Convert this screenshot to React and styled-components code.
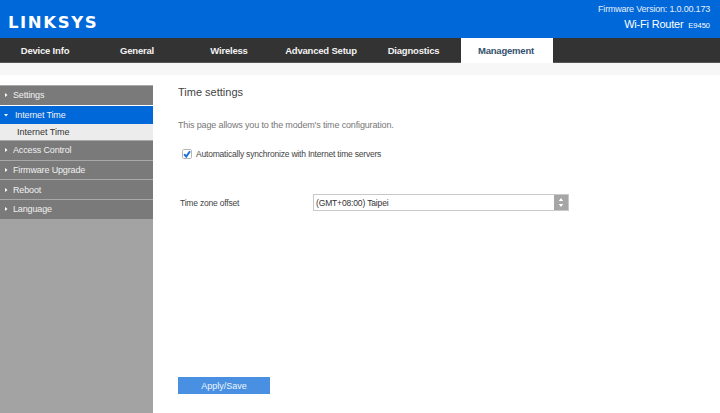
import styled, { createGlobalStyle } from 'styled-components';

const GlobalStyle = createGlobalStyle`
  html, body {
    margin: 0;
    padding: 0;
    background: #fff;
  }
  body {
    font-family: "Liberation Sans", Arial, sans-serif;
  }
`;

const tabs = [
  { label: 'Device Info', width: 92 },
  { label: 'General', width: 92 },
  { label: 'Wireless', width: 92 },
  { label: 'Advanced Setup', width: 92 },
  { label: 'Diagnostics', width: 93 },
  { label: 'Management', width: 92, active: true },
];

const menu = [
  { label: 'Settings' },
  { label: 'Internet Time', open: true, children: ['Internet Time'] },
  { label: 'Access Control' },
  { label: 'Firmware Upgrade' },
  { label: 'Reboot' },
  { label: 'Language' },
];

const Arrow = ({ open }) => (
  <ArrowBox $open={open} viewBox="0 0 6 6">
    {open ? <path d="M1 2h4L3 4.5z" /> : <path d="M2 1v4L4.5 3z" />}
  </ArrowBox>
);

const App = () => (
  <Page>
    <GlobalStyle />
    <Header>
      <Logo>LINKSYS</Logo>
      <HeaderInfo>
        <Firmware>Firmware Version: 1.0.00.173</Firmware>
        <Product>
          Wi-Fi Router <Model>E9450</Model>
        </Product>
      </HeaderInfo>
    </Header>
    <Nav>
      {tabs.map((tab) => (
        <Tab key={tab.label} $width={tab.width} $active={tab.active}>
          {tab.label}
        </Tab>
      ))}
    </Nav>
    <Strip />
    <Body>
      <Sidebar>
        {menu.map((item) => (
          <div key={item.label}>
            <MenuItem $open={item.open}>
              <Arrow open={item.open} />
              {item.label}
            </MenuItem>
            {item.children?.map((child) => (
              <SubItem key={child}>{child}</SubItem>
            ))}
          </div>
        ))}
      </Sidebar>
      <Content>
        <Title>Time settings</Title>
        <Intro>This page allows you to the modem's time configuration.</Intro>
        <CheckRow>
          <Check viewBox="0 0 10 10">
            <rect x="0.5" y="0.5" width="9" height="9" rx="1.2" fill="#fff" stroke="#b5b5b5" />
            <path d="M2.2 5.2 4.2 7.6 8 2.2" fill="none" stroke="#1a6fd8" strokeWidth="1.9" />
          </Check>
          Automatically synchronize with Internet time servers
        </CheckRow>
        <FieldRow>
          <FieldLabel>Time zone offset</FieldLabel>
          <Select>
            <SelectValue>(GMT+08:00) Taipei</SelectValue>
            <SelectButton viewBox="0 0 14 15">
              <rect width="14" height="15" fill="#a6a6a6" />
              <path d="M7 3 9.2 6H4.8zM7 12 4.8 9h4.4z" fill="#fff" />
            </SelectButton>
          </Select>
        </FieldRow>
        <ApplyButton>Apply/Save</ApplyButton>
      </Content>
    </Body>
  </Page>
);

const Page = styled.div`
  width: 720px;
  height: 413px;
  display: flex;
  flex-direction: column;
  overflow: hidden;
`;

const Header = styled.header`
  height: 38px;
  background-color: #0068d9;
  display: flex;
  justify-content: space-between;
  padding: 0 10px 0 8px;
  color: #fff;
`;

const Logo = styled.div`
  font-family: "DejaVu Sans", sans-serif;
  font-size: 16.5px;
  font-weight: 700;
  letter-spacing: 1.6px;
  line-height: 16px;
  margin-top: 15px;
`;

const HeaderInfo = styled.div`
  display: flex;
  flex-direction: column;
  align-items: flex-end;
  padding-top: 3px;
`;

const Firmware = styled.div`
  font-size: 9px;
  letter-spacing: -0.2px;
  line-height: 13px;
  color: #e4effb;
`;

const Product = styled.div`
  font-size: 11px;
  letter-spacing: -0.2px;
  line-height: 16px;
`;

const Model = styled.span`
  font-size: 7.5px;
  letter-spacing: 0;
  margin-left: 2px;
`;

const Nav = styled.nav`
  height: 24px;
  background-color: #333;
  border-bottom: 1px solid #555;
  display: flex;
`;

const Tab = styled.div`
  width: ${(p) => p.$width}px;
  box-sizing: border-box;
  padding-right: 2px;
  display: flex;
  align-items: center;
  justify-content: center;
  font-size: 9.5px;
  font-weight: 700;
  letter-spacing: -0.2px;
  background-color: ${(p) => (p.$active ? '#fff' : 'transparent')};
  color: ${(p) => (p.$active ? '#34516f' : '#f2f2f2')};
  height: ${(p) => (p.$active ? '25px' : 'auto')};
`;

const Strip = styled.div`
  height: 12px;
  background-color: #f7f7f7;
`;

const Body = styled.main`
  flex: 1;
  display: flex;
  padding-top: 10px;
  min-height: 0;
`;

const Sidebar = styled.aside`
  width: 153px;
  background-color: #a3a3a3;
  flex-shrink: 0;
`;

const MenuItem = styled.div`
  height: 18.7px;
  display: flex;
  align-items: center;
  padding-left: 3px;
  font-size: 9px;
  letter-spacing: -0.15px;
  color: #f0f0f0;
  background-color: ${(p) => (p.$open ? '#0068d9' : '#7a7a7a')};
  border-top: 1px solid ${(p) => (p.$open ? '#fff' : '#a8a8a8')};
`;

const ArrowBox = styled.svg`
  width: 6px;
  height: 6px;
  margin-right: ${(p) => (p.$open ? '6px' : '4px')};
  fill: #fff;
`;

const SubItem = styled.div`
  height: 15.6px;
  display: flex;
  align-items: center;
  padding-left: 17px;
  font-size: 9px;
  color: #333;
  background-color: #ececec;
`;

const Content = styled.section`
  flex: 1;
  padding: 0 0 0 25px;
  display: flex;
  flex-direction: column;
  color: #555;
`;

const Title = styled.h1`
  margin: 0;
  font-size: 11px;
  font-weight: 400;
  line-height: 15px;
  color: #444;
`;

const Intro = styled.p`
  margin: 19px 0 0;
  font-size: 9px;
  letter-spacing: -0.15px;
  line-height: 12px;
  color: #777;
`;

const CheckRow = styled.label`
  display: flex;
  align-items: center;
  margin: 17px 0 0 4px;
  font-size: 8.5px;
  letter-spacing: -0.2px;
  line-height: 12px;
  color: #444;
`;

const Check = styled.svg`
  width: 10px;
  height: 10px;
  margin-right: 4px;
`;

const FieldRow = styled.div`
  display: flex;
  align-items: center;
  margin: 34px 0 0 2px;
`;

const FieldLabel = styled.div`
  width: 133px;
  font-size: 8.5px;
  letter-spacing: -0.2px;
  color: #444;
`;

const Select = styled.div`
  width: 254px;
  height: 15px;
  border: 1px solid #c8c8c8;
  display: flex;
  align-items: center;
  justify-content: space-between;
`;

const SelectValue = styled.span`
  padding-left: 2px;
  font-size: 8.5px;
  letter-spacing: -0.15px;
  color: #333;
`;

const SelectButton = styled.svg`
  width: 14px;
  height: 15px;
`;

const ApplyButton = styled.button`
  width: 92px;
  height: 17px;
  margin-top: auto;
  margin-bottom: 19px;
  padding: 0;
  border: none;
  background-color: #4a90e2;
  color: #eef5fd;
  font-family: "Liberation Sans", sans-serif;
  font-size: 9px;
`;

export default App;
